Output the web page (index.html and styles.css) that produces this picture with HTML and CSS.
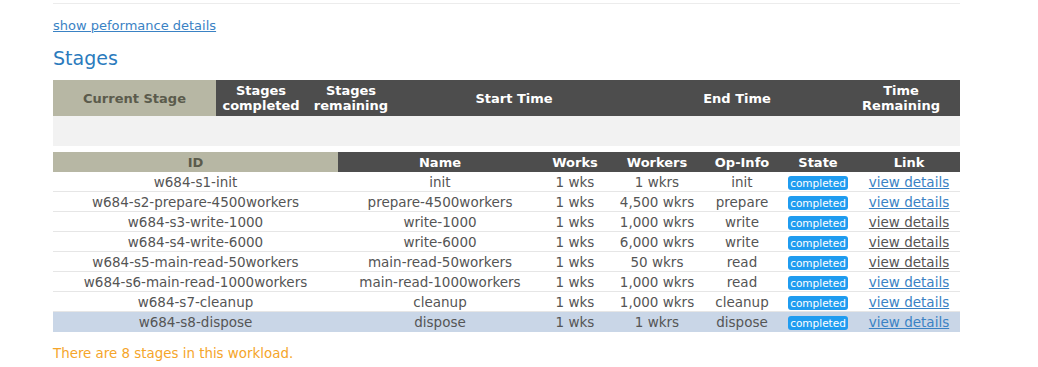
FILE: index.html
```html
<!DOCTYPE html>
<html>
<head>
<meta charset="utf-8">
<link rel="stylesheet" href="styles.css">
</head>
<body>
<div class="page">
  <div class="topline"></div>
  <a class="perf-link" href="#">show peformance details</a>
  <h2 class="title">Stages</h2>
  <table class="summary">
    <colgroup>
      <col style="width:163px"><col style="width:90px"><col style="width:90px"><col style="width:236px"><col style="width:210px"><col style="width:118px">
    </colgroup>
    <thead>
      <tr>
        <th class="beige">Current Stage</th>
        <th>Stages<br>completed</th>
        <th>Stages<br>remaining</th>
        <th>Start Time</th>
        <th>End Time</th>
        <th>Time<br>Remaining</th>
      </tr>
    </thead>
    <tbody>
      <tr class="empty"><td></td><td></td><td></td><td></td><td></td><td></td></tr>
    </tbody>
  </table>
  <table class="stages">
    <colgroup>
      <col style="width:285px"><col style="width:204px"><col style="width:66px"><col style="width:98px"><col style="width:72px"><col style="width:80px"><col style="width:102px">
    </colgroup>
    <thead>
      <tr>
        <th class="beige">ID</th>
        <th>Name</th>
        <th>Works</th>
        <th>Workers</th>
        <th>Op-Info</th>
        <th>State</th>
        <th>Link</th>
      </tr>
    </thead>
    <tbody>
      <tr><td>w684-s1-init</td><td>init</td><td>1 wks</td><td>1 wkrs</td><td>init</td><td><span class="badge">completed</span></td><td><a href="#" class="view">view details</a></td></tr>
      <tr><td>w684-s2-prepare-4500workers</td><td>prepare-4500workers</td><td>1 wks</td><td>4,500 wkrs</td><td>prepare</td><td><span class="badge">completed</span></td><td><a href="#" class="view">view details</a></td></tr>
      <tr><td>w684-s3-write-1000</td><td>write-1000</td><td>1 wks</td><td>1,000 wkrs</td><td>write</td><td><span class="badge">completed</span></td><td><a href="#" class="view visited">view details</a></td></tr>
      <tr><td>w684-s4-write-6000</td><td>write-6000</td><td>1 wks</td><td>6,000 wkrs</td><td>write</td><td><span class="badge">completed</span></td><td><a href="#" class="view visited">view details</a></td></tr>
      <tr><td>w684-s5-main-read-50workers</td><td>main-read-50workers</td><td>1 wks</td><td>50 wkrs</td><td>read</td><td><span class="badge">completed</span></td><td><a href="#" class="view visited">view details</a></td></tr>
      <tr><td>w684-s6-main-read-1000workers</td><td>main-read-1000workers</td><td>1 wks</td><td>1,000 wkrs</td><td>read</td><td><span class="badge">completed</span></td><td><a href="#" class="view">view details</a></td></tr>
      <tr><td>w684-s7-cleanup</td><td>cleanup</td><td>1 wks</td><td>1,000 wkrs</td><td>cleanup</td><td><span class="badge">completed</span></td><td><a href="#" class="view">view details</a></td></tr>
      <tr class="current"><td>w684-s8-dispose</td><td>dispose</td><td>1 wks</td><td>1 wkrs</td><td>dispose</td><td><span class="badge">completed</span></td><td><a href="#" class="view">view details</a></td></tr>
    </tbody>
  </table>
  <p class="note">There are 8 stages in this workload.</p>
</div>
</body>
</html>
```

FILE: styles.css
```css
html, body {
  margin: 0;
  padding: 0;
  background: #fff;
}
body {
  font-family: "DejaVu Sans", Verdana, sans-serif;
  font-size: 13px;
  color: #555;
}
.page {
  width: 907px;
  margin-left: 53px;
  padding-top: 3px;
  display: flex;
  flex-direction: column;
  align-items: flex-start;
}
.topline {
  width: 100%;
  height: 0;
  border-top: 1px solid #ececec;
}
.perf-link {
  margin-top: 14px;
  font-size: 13px;
  line-height: 16px;
  color: #3a82c4;
  text-decoration: underline;
}
.title {
  margin: 12px 0 0 0;
  font-size: 19px;
  line-height: 24px;
  font-weight: normal;
  color: #2b7bbd;
}
table {
  border-collapse: collapse;
  table-layout: fixed;
  width: 907px;
}
th {
  background: #4d4d4d;
  color: #fff;
  font-weight: bold;
  font-size: 13px;
  text-align: center;
  padding: 0 2px;
  line-height: 15px;
}
th.beige {
  background: #b7b7a4;
  color: #5b5b4c;
}
.summary {
  margin-top: 10px;
}
.summary th {
  height: 36px;
}
.summary .empty td {
  background: #f2f2f2;
  height: 30px;
  padding: 0;
}
.stages {
  margin-top: 6px;
}
.stages th {
  height: 20px;
  padding: 0 2px;
}
.stages td {
  text-align: center;
  font-size: 13.5px;
  padding: 2px 2px 0;
  line-height: 17px;
  border-bottom: 1px solid #e6e6e6;
  white-space: nowrap;
  overflow: hidden;
}
.stages tr.current td {
  background: #c9d6e7;
  border-bottom-color: #c9d6e7;
}
.badge {
  display: inline-block;
  background: #1f9cf0;
  color: #fff;
  font-size: 10.5px;
  line-height: 14px;
  padding: 0 2px;
  border-radius: 3px;
  vertical-align: middle;
}
.view {
  color: #3a82c4;
  text-decoration: underline;
}
.view.visited {
  color: #555;
}
.note {
  margin: 14px 0 0 0;
  font-size: 13.4px;
  color: #f5a52a;
}
```
